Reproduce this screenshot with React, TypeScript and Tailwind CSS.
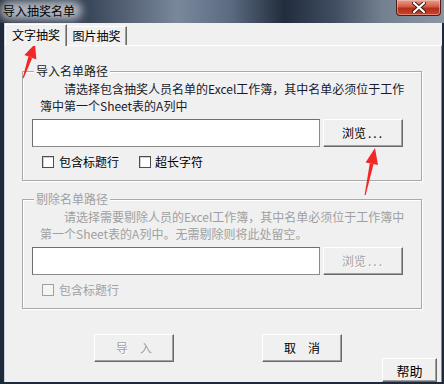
import React from "react";

const font = { fontFamily: '"Noto Sans CJK SC", "Noto Sans", sans-serif' };

function Btn3D({
  children,
  className = "",
  disabled = false,
}: {
  children: React.ReactNode;
  className?: string;
  disabled?: boolean;
}) {
  return (
    <div
      className={
        "flex items-center justify-center bg-[#f0f0f0] border border-t-white border-l-white border-r-[#696969] border-b-[#696969] shadow-[inset_-1px_-1px_0_#a0a0a0] text-[12px] leading-none " +
        (disabled ? "text-[#a0a0a0] [text-shadow:1px_1px_0_#ffffff] " : "text-black ") +
        className
      }
    >
      {children}
    </div>
  );
}

function Check({ disabled = false }: { disabled?: boolean }) {
  return (
    <div
      className={
        "w-[12px] h-[12px] border " +
        (disabled
          ? "border-[#a0a0a0] bg-[#f4f4f4]"
          : "border-[#4d4d4d] bg-white shadow-[inset_1px_1px_0_#d0d0d0]")
      }
    />
  );
}

function Input() {
  return (
    <div className="w-[288px] h-[28px] bg-white border border-t-[#6e6e6e] border-l-[#6e6e6e] border-r-[#8a8a8a] border-b-[#8a8a8a]" />
  );
}

function Group({
  title,
  disabled = false,
  children,
  className = "",
}: {
  title: string;
  disabled?: boolean;
  children: React.ReactNode;
  className?: string;
}) {
  return (
    <div
      className={
        "relative w-[400px] h-[110px] border border-[#a9a9a9] shadow-[inset_1px_1px_0_#ffffff,1px_1px_0_#ffffff] " +
        className
      }
    >
      <div
        className={
          "absolute left-[11px] top-[-9px] px-[2px] bg-[#f0f0f0] text-[12px] leading-[16px] " +
          (disabled ? "text-[#a0a0a0]" : "text-[#1a1a1a]")
        }
      >
        {title}
      </div>
      {children}
    </div>
  );
}

export default function App() {
  return (
    <div
      className="relative w-[444px] h-[384px] overflow-hidden flex flex-col bg-[#1e2a3b]"
      style={font}
    >
      {/* Title bar */}
      <div className="relative h-[23px] flex items-start overflow-hidden bg-[linear-gradient(90deg,#2a3240_0%,#3a4659_20%,#7a889c_40%,#5b6a80_52%,#222c3d_64%,#3f4c60_75%,#72808f_86%,#8a96a4_100%)]">
        <div className="absolute left-[0px] top-[1px] w-[82px] h-[19px] rounded-[10px] bg-[rgba(225,232,240,0.7)] blur-[4px]" />
        <div className="relative ml-[3px] mt-[3px] text-[12px] leading-[16px] text-black">
          导入抽奖名单
        </div>
        <div className="relative ml-auto mr-[3px] w-[45px] h-[16px] rounded-b-[4px] border border-t-0 border-[#4a1e1a] bg-[linear-gradient(180deg,#e8a090_0%,#d25a45_45%,#b52e18_55%,#c8452c_100%)] flex items-center justify-center shadow-[inset_0_0_0_1px_rgba(255,200,190,0.5)]">
          <svg width="14" height="11" viewBox="0 0 14 11">
            <path
              d="M2 1 L12 10 M12 1 L2 10"
              stroke="#3a1a16"
              strokeWidth="4"
              strokeLinecap="round"
            />
            <path
              d="M2 1 L12 10 M12 1 L2 10"
              stroke="#ffffff"
              strokeWidth="2.2"
              strokeLinecap="round"
            />
          </svg>
        </div>
      </div>

      {/* Client area */}
      <div className="ml-[4px] mr-[2px] mb-[2px] flex-1 flex flex-col bg-[#f0f0f0] border-l border-[#c8d0da]">
        {/* Tabs */}
        <div className="h-[22px] flex items-end text-[12px] text-black">
          <div className="relative z-10 h-[22px] w-[62px] mb-[-1px] bg-[#f0f0f0] border-t border-l border-r border-t-white border-l-white border-r-[#696969] shadow-[inset_-1px_0_0_#a0a0a0] flex items-start justify-center pt-[2px] leading-[16px]">
            文字抽奖
          </div>
          <div className="h-[19px] w-[60px] bg-[#f0f0f0] border-t border-r border-t-white border-r-[#696969] shadow-[inset_-1px_0_0_#a0a0a0] flex items-start justify-center pt-[1px] leading-[16px]">
            图片抽奖
          </div>
        </div>

        {/* Panel */}
        <div className="flex-1 flex flex-col border-t border-r border-t-white border-r-[#8a8a8a]">
          <Group title="导入名单路径" className="ml-[17px] mt-[25px]">
            <div className="pt-[8px] pl-[17px] text-[12px] leading-[17px] text-[#1a1a2a] whitespace-nowrap">
              <div className="pl-[24px]">
                请选择包含抽奖人员名单的Excel工作簿，其中名单必须位于工作
              </div>
              <div>簿中第一个Sheet表的A列中</div>
            </div>
            <div className="mt-[5px] ml-[9px] flex gap-[3px]">
              <Input />
              <Btn3D className="w-[80px] h-[28px]">
                浏览<span className="tracking-[2px] ml-[2px]">...</span>
              </Btn3D>
            </div>
            <div className="mt-[7px] ml-[19px] flex items-center h-[16px] text-[12px] text-black">
              <Check />
              <span className="ml-[5px]">包含标题行</span>
              <div className="ml-[20px]">
                <Check />
              </div>
              <span className="ml-[4px]">超长字符</span>
            </div>
          </Group>

          <Group title="剔除名单路径" disabled className="ml-[17px] mt-[18px]">
            <div className="pt-[8px] pl-[17px] text-[12px] leading-[17px] text-[#a0a0a0] whitespace-nowrap">
              <div className="pl-[24px]">
                请选择需要剔除人员的Excel工作簿，其中名单必须位于工作簿中
              </div>
              <div>第一个Sheet表的A列中。无需剔除则将此处留空。</div>
            </div>
            <div className="mt-[5px] ml-[9px] flex gap-[3px]">
              <Input />
              <Btn3D disabled className="w-[80px] h-[28px]">
                浏览<span className="tracking-[2px] ml-[2px]">...</span>
              </Btn3D>
            </div>
            <div className="mt-[7px] ml-[19px] flex items-center h-[16px] text-[12px] text-[#a0a0a0]">
              <Check disabled />
              <span className="ml-[5px]">包含标题行</span>
            </div>
          </Group>

          <div className="mt-[25px] ml-[89px] flex items-start">
            <Btn3D disabled className="w-[80px] h-[28px]">
              导　入
            </Btn3D>
            <Btn3D className="ml-[88px] w-[80px] h-[28px]">取　消</Btn3D>
            <Btn3D className="ml-[40px] mt-[24px] w-[55px] h-[24px] text-[13px]">
              帮助
            </Btn3D>
          </div>
        </div>
      </div>

      {/* Annotation arrows */}
      <svg
        className="absolute left-0 top-0 pointer-events-none"
        width="444"
        height="384"
        viewBox="0 0 444 384"
      >
        <polygon
          points="22.6,78 23.6,78.3 32.2,58 28.4,56.6"
          fill="#f02828"
        />
        <polygon points="24.4,55 35,44 36.4,59.4" fill="#f02828" />
        <polygon
          points="364.6,195 365.6,195.2 373.6,164 369.8,163.2"
          fill="#f02828"
        />
        <polygon points="365.6,162.4 375,148 378,165" fill="#f02828" />
      </svg>
    </div>
  );
}
